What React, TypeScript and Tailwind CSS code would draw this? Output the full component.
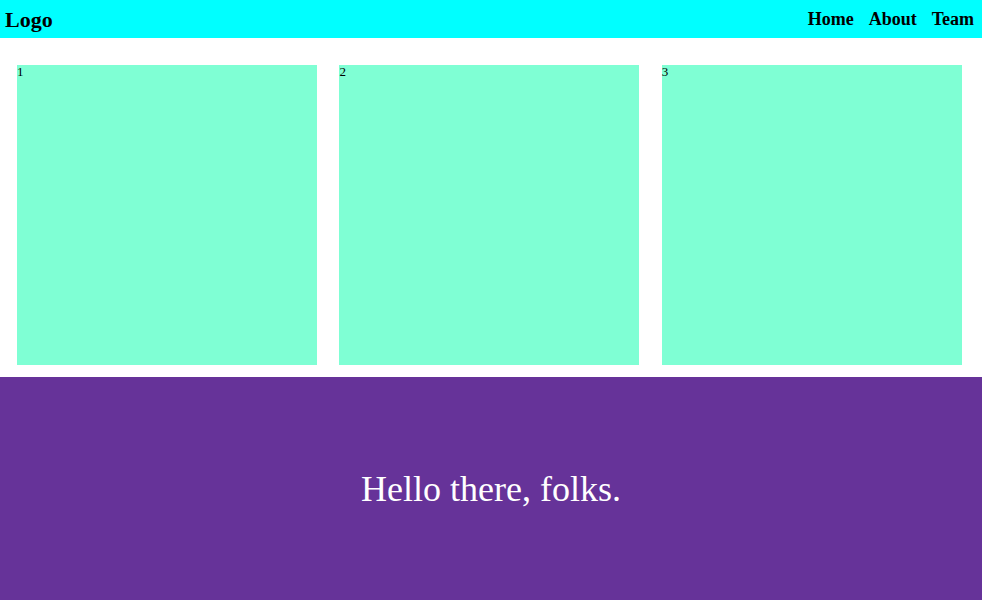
export default function App() {
  return (
    <div className="min-h-[600px] flex flex-col bg-white font-['Liberation_Serif',serif] text-black">
      <header className="h-[38px] shrink-0 flex items-center justify-between bg-[#00ffff] pl-[5px] pr-[8px]">
        <span className="text-[22px] font-bold">Logo</span>
        <nav className="flex items-center gap-[15px] text-[18px] font-bold">
          <span>Home</span>
          <span>About</span>
          <span>Team</span>
        </nav>
      </header>
      <section className="flex pl-[17px] pt-[27px] pb-[12px] gap-[22.4px]">
        {[1, 2, 3].map((n) => (
          <div key={n} className="w-[300px] h-[300px] shrink-0 bg-[#7fffd4] text-[13px] leading-[14px]">
            {n}
          </div>
        ))}
      </section>
      <footer className="h-[223px] flex items-center justify-center bg-[#663399] text-white text-[36px]">
        Hello there, folks.
      </footer>
    </div>
  );
}
